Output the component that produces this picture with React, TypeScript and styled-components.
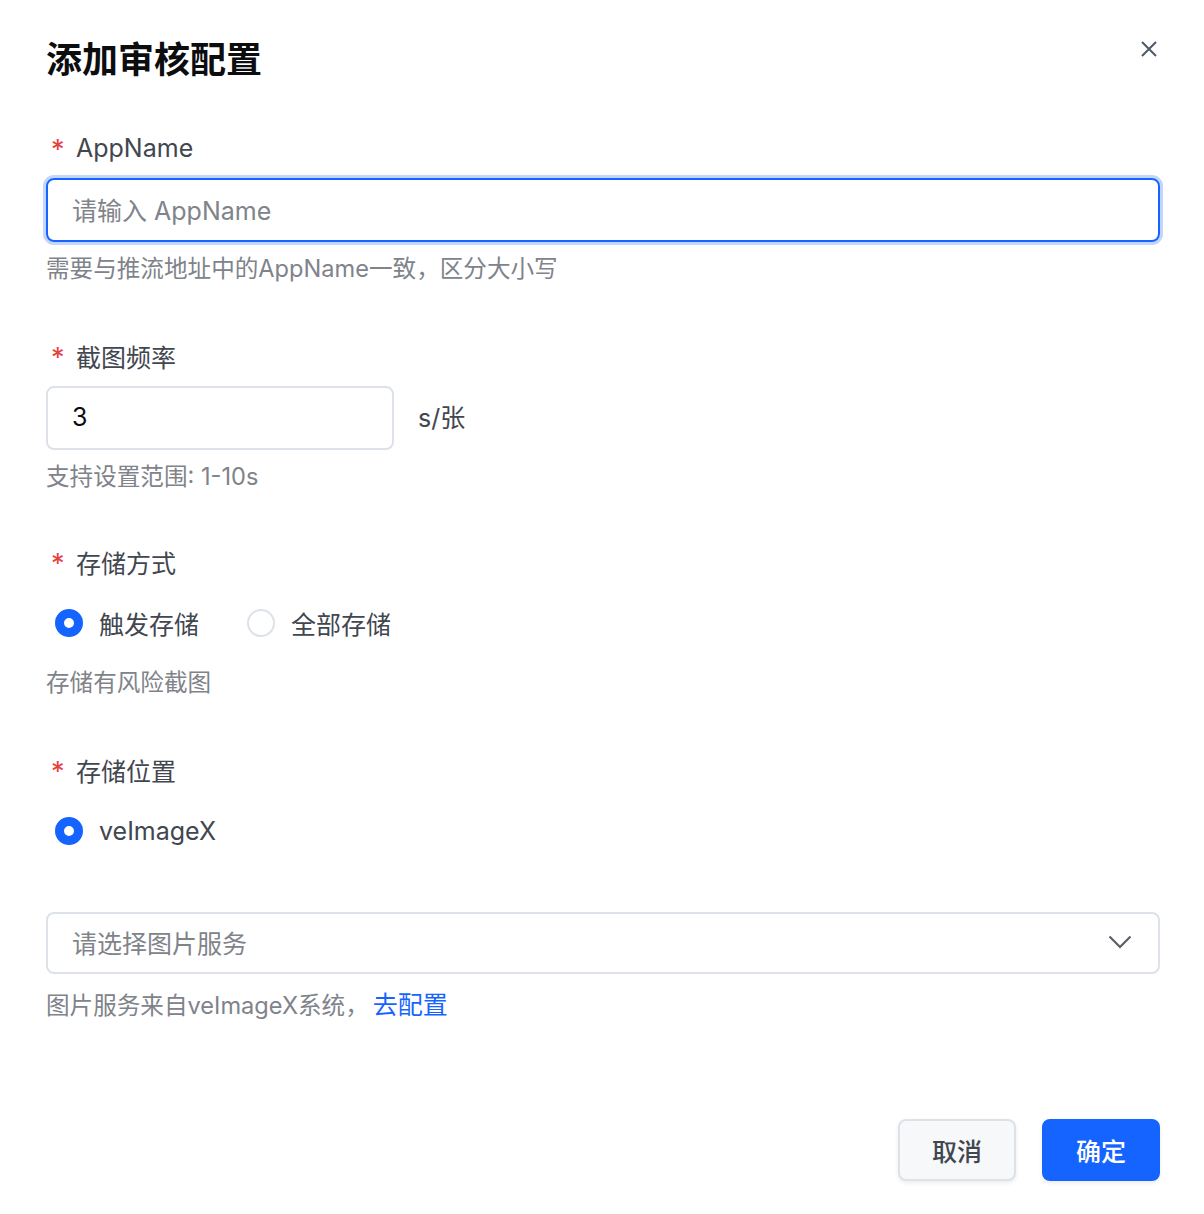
import styled, { createGlobalStyle } from 'styled-components';

const GlobalStyle = createGlobalStyle`
  body {
    margin: 0;
    background: #ffffff;
    font-family: Inter, "Noto Sans CJK SC", sans-serif;
  }
`;

const Dialog = styled.div`
  width: 1204px;
  height: 1214px;
  box-sizing: border-box;
  padding: 40px 44px 0 46px;
  display: flex;
  flex-direction: column;
`;

const Header = styled.div`
  display: flex;
  justify-content: space-between;
  align-items: flex-start;
`;

const Title = styled.h1`
  margin: 0;
  font-size: 36px;
  line-height: 40px;
  font-weight: 600;
  color: #0c0d0e;
`;

const CloseButton = styled.button`
  border: none;
  background: none;
  padding: 0;
  margin: 1px 3px 0 0;
  width: 16px;
  height: 16px;
  display: flex;
  cursor: pointer;
`;

const Form = styled.div`
  margin-top: 50px;
  display: flex;
  flex-direction: column;
`;

const Item = styled.div<{ $gap?: number }>`
  display: flex;
  flex-direction: column;
  margin-bottom: ${(p) => p.$gap ?? 52}px;
`;

const Label = styled.div`
  display: flex;
  align-items: center;
  height: 36px;
  font-size: 25px;
  color: #41464f;
  margin-bottom: 12px;
`;

const Required = styled.span`
  color: #e63f3f;
  width: 30px;
  padding-left: 5px;
  box-sizing: border-box;
  font-size: 27px;
  line-height: 36px;
  padding-top: 4px;
`;

const Control = styled.div`
  display: flex;
  align-items: center;
  min-height: 64px;
  gap: 24px;
`;

const Input = styled.div<{ $focus?: boolean; $width?: number; $height?: number }>`
  box-sizing: border-box;
  width: ${(p) => (p.$width ? `${p.$width}px` : '100%')};
  height: ${(p) => p.$height ?? 64}px;
  border: 2px solid ${(p) => (p.$focus ? '#1664ff' : '#dde2e9')};
  border-radius: 8px;
  box-shadow: ${(p) => (p.$focus ? '0 0 0 3px #c2d6fd' : 'none')};
  display: flex;
  align-items: center;
  justify-content: space-between;
  padding: 0 26px 3px 24px;
  font-size: 25px;
`;

const Placeholder = styled.span`
  color: #80838a;
`;

const Value = styled.span`
  color: #0c0d0e;
`;

const Suffix = styled.span`
  font-size: 25px;
  color: #41464f;
  padding-bottom: 4px;
`;

const Help = styled.div<{ $top?: number }>`
  margin-top: ${(p) => p.$top ?? 11}px;
  font-size: 23.6px;
  line-height: 32px;
  color: #80838a;
`;

const Link = styled.a`
  color: #1664ff;
  margin-left: 4px;
  font-size: 25px;
  text-decoration: none;
`;

const RadioGroup = styled.div`
  display: flex;
  align-items: center;
  gap: 48px;
  padding-left: 9px;
`;

const RadioOption = styled.label`
  display: flex;
  align-items: center;
  gap: 16px;
  font-size: 25px;
  color: #41464f;
  margin-top: -2px;
`;

const RadioDot = styled.span<{ $checked?: boolean }>`
  box-sizing: border-box;
  width: 28px;
  height: 28px;
  border-radius: 50%;
  border: ${(p) => (p.$checked ? '9px solid #1664ff' : '2px solid #dde2e9')};
  background: #fff;
`;

const Footer = styled.div`
  margin-top: auto;
  margin-bottom: 33px;
  display: flex;
  justify-content: flex-end;
  gap: 26px;
`;

const Button = styled.button<{ $primary?: boolean }>`
  box-sizing: border-box;
  width: 118px;
  height: 62px;
  border-radius: 8px;
  font-family: inherit;
  font-size: 25px;
  font-weight: 500;
  border: 2px solid ${(p) => (p.$primary ? '#1664ff' : '#dde2e9')};
  background: ${(p) => (p.$primary ? '#1664ff' : '#f6f8fa')};
  color: ${(p) => (p.$primary ? '#ffffff' : '#41464f')};
  box-shadow: 0 2px 4px rgba(0, 0, 0, 0.08);
`;

const CloseIcon = () => (
  <svg width="16" height="16" viewBox="0 0 16 16" fill="none">
    <path d="M1 1L15 15M15 1L1 15" stroke="#4e5969" strokeWidth="2" />
  </svg>
);

const Chevron = () => (
  <svg width="24" height="14" viewBox="0 0 24 14" fill="none">
    <path d="M1.5 1.5L12 12L22.5 1.5" stroke="#5a5f69" strokeWidth="2.2" />
  </svg>
);

export default function App() {
  return (
    <>
      <GlobalStyle />
      <Dialog>
        <Header>
          <Title>添加审核配置</Title>
          <CloseButton aria-label="关闭">
            <CloseIcon />
          </CloseButton>
        </Header>
        <Form>
          <Item $gap={53}>
            <Label>
              <Required>*</Required>AppName
            </Label>
            <Input $focus>
              <Placeholder>请输入 AppName</Placeholder>
            </Input>
            <Help>需要与推流地址中的AppName一致，区分大小写</Help>
          </Item>
          <Item $gap={51}>
            <Label>
              <Required>*</Required>截图频率
            </Label>
            <Control>
              <Input $width={348}>
                <Value>3</Value>
              </Input>
              <Suffix>s/张</Suffix>
            </Control>
            <Help>支持设置范围: 1-10s</Help>
          </Item>
          <Item $gap={53}>
            <Label>
              <Required>*</Required>存储方式
            </Label>
            <Control>
              <RadioGroup>
                <RadioOption>
                  <RadioDot $checked />
                  触发存储
                </RadioOption>
                <RadioOption>
                  <RadioDot />
                  全部存储
                </RadioOption>
              </RadioGroup>
            </Control>
            <Help>存储有风险截图</Help>
          </Item>
          <Item $gap={48}>
            <Label>
              <Required>*</Required>存储位置
            </Label>
            <Control>
              <RadioGroup>
                <RadioOption>
                  <RadioDot $checked />
                  veImageX
                </RadioOption>
              </RadioGroup>
            </Control>
          </Item>
          <Item $gap={0}>
            <Input $height={62}>
              <Placeholder>请选择图片服务</Placeholder>
              <Chevron />
            </Input>
            <Help $top={15}>
              图片服务来自veImageX系统，
              <Link href="#">去配置</Link>
            </Help>
          </Item>
        </Form>
        <Footer>
          <Button>取消</Button>
          <Button $primary>确定</Button>
        </Footer>
      </Dialog>
    </>
  );
}
